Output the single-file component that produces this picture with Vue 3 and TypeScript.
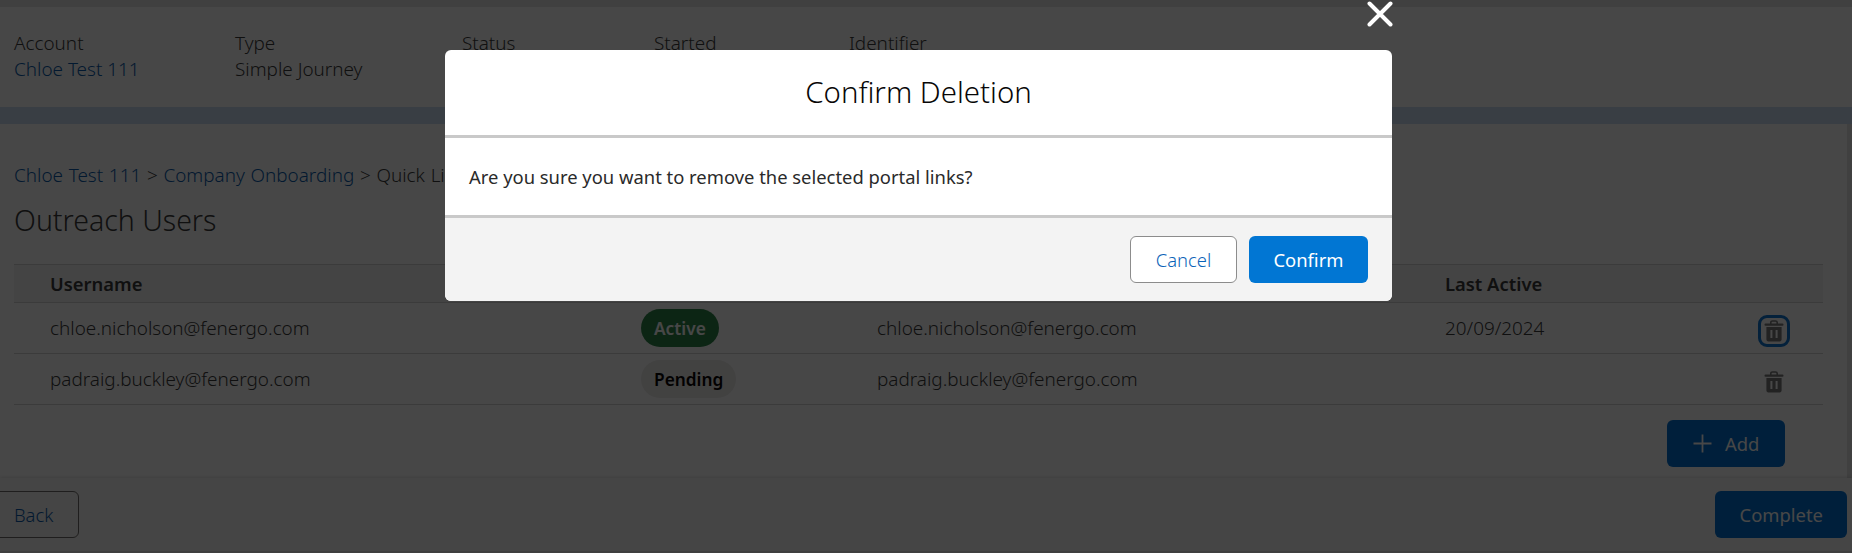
<script setup lang="ts">
interface Row { user: string; status: string; cls: string; email: string; last: string; focused: boolean }
const summary = [
  { label: 'Account', value: 'Chloe Test 111', link: true, cls: 'c1' },
  { label: 'Type', value: 'Simple Journey', link: false, cls: 'c2' },
  { label: 'Status', value: 'In Progress', link: false, cls: 'c3' },
  { label: 'Started', value: '20/09/2024', link: false, cls: 'c4' },
  { label: 'Identifier', value: '', link: false, cls: 'c5' },
]
const rows: Row[] = [
  { user: 'chloe.nicholson@fenergo.com', status: 'Active', cls: 'active', email: 'chloe.nicholson@fenergo.com', last: '20/09/2024', focused: true },
  { user: 'padraig.buckley@fenergo.com', status: 'Pending', cls: 'pending', email: 'padraig.buckley@fenergo.com', last: '', focused: false },
]
</script>

<template>
  <div class="root">
    <div class="page">
      <div class="topstrip"></div>
      <section class="summary">
        <div v-for="s in summary" :key="s.label" class="sum-item" :class="s.cls">
          <div class="sum-label">{{ s.label }}</div>
          <div class="sum-value" :class="{ link: s.link }">{{ s.value }}</div>
        </div>
      </section>
      <div class="band"></div>
      <section class="content">
        <div class="crumbs"><span class="link">Chloe Test 111</span> &gt; <span class="link">Company Onboarding</span> &gt; Quick Links</div>
        <h1 class="heading">Outreach Users</h1>
        <div class="table">
          <div class="row head">
            <div>Username</div><div>Status</div><div>Email</div><div>Last Active</div><div></div>
          </div>
          <div v-for="r in rows" :key="r.user" class="row">
            <div>{{ r.user }}</div>
            <div><span class="pill" :class="r.cls">{{ r.status }}</span></div>
            <div>{{ r.email }}</div>
            <div>{{ r.last }}</div>
            <div class="actions">
              <button class="trash" :class="{ focused: r.focused }" aria-label="Delete">
                <svg width="20" height="24" viewBox="0 0 20 24">
                  <path d="M6.8 5V3.6c0-1 .7-1.6 1.6-1.6h3.2c.9 0 1.6.6 1.6 1.6V5" fill="none" stroke="#7c7c7c" stroke-width="1.6"/>
                  <rect x="0.5" y="4.6" width="19" height="2.2" rx="1" fill="#7c7c7c"/>
                  <path fill-rule="evenodd" fill="#7c7c7c" d="M2.4 8h15.2v12.6c0 1-.8 1.8-1.8 1.8H4.2c-1 0-1.8-.8-1.8-1.8zM6.4 11v8h2V11zM11.6 11v8h2V11z"/>
                </svg>
              </button>
            </div>
          </div>
        </div>
        <div class="addline">
          <button class="btn primary add">
            <svg width="19" height="19" viewBox="0 0 19 19"><path d="M9.5 0.5v18M0.5 9.5h18" stroke="#fff" stroke-width="1.8" fill="none"/></svg>
            <span>Add</span>
          </button>
        </div>
      </section>
      <footer class="footer">
        <button class="btn outline back">Back</button>
        <button class="btn primary complete">Complete</button>
      </footer>
    </div>

    <div class="overlay"></div>
    <svg class="close" width="26" height="26" viewBox="0 0 26 26" aria-label="Close">
      <path d="M2.5 2.5l21 21M23.5 2.5l-21 21" stroke="#fff" stroke-width="4" stroke-linecap="round" fill="none"/>
    </svg>
    <div class="modal">
      <div class="m-head">Confirm Deletion</div>
      <div class="m-body">Are you sure you want to remove the selected portal links?</div>
      <div class="m-foot">
        <button class="m-btn cancel">Cancel</button>
        <button class="m-btn confirm">Confirm</button>
      </div>
    </div>
  </div>
</template>

<style>
html, body { margin: 0; padding: 0; background: #e9e9e9; }
</style>

<style scoped>
.root {
  position: relative;
  width: 1852px;
  height: 553px;
  overflow: hidden;
  font-family: "Noto Sans", "Open Sans", sans-serif;
  font-size: 18.9px;
  font-weight: 300;
  color: #3a3a3a;
}
.page { display: flex; flex-direction: column; height: 553px; background: #e4e4e4; }
.topstrip { height: 7px; background: #e6e6e6; }
.summary { height: 100px; background: #fff; display: flex; padding: 23px 0 0 14px; box-sizing: border-box; }
.sum-item { line-height: 26px; }
.c1 { width: 221px; } .c2 { width: 227px; } .c3 { width: 192px; } .c4 { width: 195px; }
.link { color: #0b5cab; }
.band { height: 17px; background: #cbddf4; }
.content {
  flex: 1;
  margin-right: 5px;
  background: #fff;
  padding: 37px 24px 0 14px;
  display: flex;
  flex-direction: column;
}
.crumbs { line-height: 28px; height: 28px; word-spacing: 0.8px; }
.heading { margin: 0; padding-top: 12px; font-size: 28.5px; font-weight: 300; line-height: 38px; height: 75px; box-sizing: border-box; }
.row {
  display: grid;
  grid-template-columns: 591px 236px 568px 1fr 110px;
  padding-left: 36px;
  padding-bottom: 1px;
  height: 51px;
  align-items: center;
  border-bottom: 1px solid #d4d4d4;
  box-sizing: border-box;
}
.row.head { height: 39px; background: #f3f3f3; font-size: 18.4px; font-weight: 600; border-top: 1px solid #d4d4d4; padding-bottom: 0; }
.pill {
  display: inline-flex;
  align-items: center;
  height: 38px;
  padding: 0 13px;
  border-radius: 19px;
  font-size: 17.3px;
  font-weight: 600;
  margin-top: 1px;
}
.pill.active { background: #2e844a; color: #fff; }
.pill.pending { background: #ecebea; color: #080707; }
.actions { display: flex; padding-left: 45px; }
.trash {
  width: 32px;
  height: 32px;
  padding: 0;
  border: 3px solid transparent;
  border-radius: 9px;
  background: none;
  display: flex;
  align-items: center;
  justify-content: center;
  margin-top: 6px;
}
.trash.focused { border-color: #0f76d2; }
.addline { display: flex; justify-content: flex-end; padding: 15px 38px 0 0; }
.btn { font: inherit; font-size: 18.4px; font-weight: 400; height: 47px; border-radius: 6px; box-sizing: border-box; }
.primary { background: #0070d2; border: none; color: #fff; }
.add { width: 118px; display: flex; align-items: center; gap: 13px; padding: 0 0 0 26px; }
.footer {
  height: 73px;
  margin-bottom: 2px;
  background: #f6f6f6;
  box-shadow: 0 -1px 3px rgba(0,0,0,.12);
  display: flex;
  justify-content: space-between;
  align-items: flex-start;
  padding: 13px 5px 0 0;
  box-sizing: border-box;
  position: relative;
}
.back { width: 90px; margin-left: -11px; background: #f6f6f6; border: 1px solid #706e6b; color: #0b5cab; font-weight: 300; text-align: left; padding-left: 24px; }
.complete { width: 132px; text-align: right; padding-right: 24px; }

.overlay { position: absolute; inset: 0; background: rgba(0,0,0,.72); }
.close { position: absolute; left: 1367px; top: 1px; }
.modal {
  position: absolute;
  left: 445px;
  top: 50px;
  width: 947px;
  height: 251px;
  background: #fff;
  border-radius: 6px;
  overflow: hidden;
  display: flex;
  flex-direction: column;
}
.m-head {
  height: 88px;
  box-sizing: border-box;
  border-bottom: 3px solid #c9c9c9;
  font-size: 29.4px;
  line-height: 84px;
  text-align: center;
  color: #080707;
  font-weight: 300;
}
.m-body {
  height: 80px;
  box-sizing: border-box;
  border-bottom: 3px solid #c9c9c9;
  padding-left: 24px;
  font-size: 18.4px;
  line-height: 77px;
  color: #2a2a2a;
  font-weight: 400;
}
.m-foot {
  flex: 1;
  background: #f3f3f3;
  display: flex;
  justify-content: flex-end;
  gap: 12px;
  padding: 18px 24px 0 0;
}
.m-btn { font: inherit; font-size: 18.4px; font-weight: 400; height: 47px; border-radius: 6px; box-sizing: border-box; }
.cancel { width: 107px; background: #fff; border: 1px solid #8c8c8c; color: #0b63b8; font-weight: 300; }
.confirm { width: 119px; background: #0176d3; border: none; color: #fff; }
</style>
